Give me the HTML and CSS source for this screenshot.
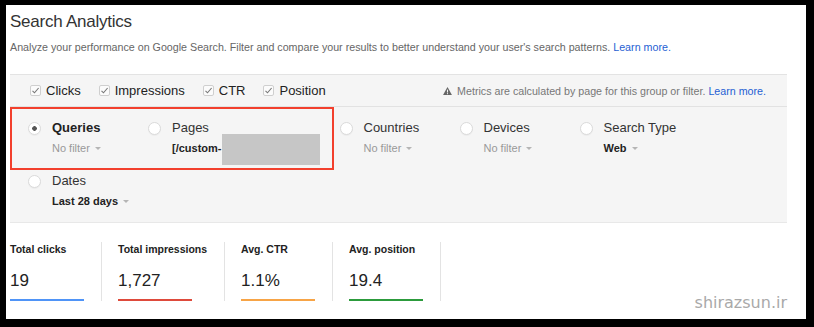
FILE: index.html
```html
<!DOCTYPE html>
<html lang="en">

<head>
    <meta charset="UTF-8">
    <meta name="viewport" content="width=device-width, initial-scale=1.0">
    <title>Search Analytics</title>
    <link rel="stylesheet" href="styles.css">
</head>

<body>
    <div class="panel">
        <h1 class="title">Search Analytics</h1>
        <p class="intro">Analyze your performance on Google Search. Filter and compare your results to better understand your user's search patterns. <a href="#">Learn more.</a></p>

        <div class="filters">
            <div class="metrics">
                <label class="metric"><svg class="check" viewBox="0 0 11 11"><rect x="0.5" y="0.5" width="10" height="10" rx="1.5" /><polyline points="2.5,5.8 4.5,7.8 8.6,3" /></svg>Clicks</label>
                <label class="metric"><svg class="check" viewBox="0 0 11 11"><rect x="0.5" y="0.5" width="10" height="10" rx="1.5" /><polyline points="2.5,5.8 4.5,7.8 8.6,3" /></svg>Impressions</label>
                <label class="metric"><svg class="check" viewBox="0 0 11 11"><rect x="0.5" y="0.5" width="10" height="10" rx="1.5" /><polyline points="2.5,5.8 4.5,7.8 8.6,3" /></svg>CTR</label>
                <label class="metric"><svg class="check" viewBox="0 0 11 11"><rect x="0.5" y="0.5" width="10" height="10" rx="1.5" /><polyline points="2.5,5.8 4.5,7.8 8.6,3" /></svg>Position</label>

                <p class="notice"><svg class="warn" viewBox="0 0 10 9"><polygon points="5,0 10,9 0,9" /><rect x="4.4" y="3" width="1.2" height="3.2" /><rect x="4.4" y="6.9" width="1.2" height="1.2" /></svg>Metrics are calculated by page for this group or filter.&nbsp;<a href="#">Learn more.</a></p>
            </div>

            <div class="filter-row">
                <div class="highlight">
                    <div class="filter-item">
                        <span class="radio on"></span>
                        <div>
                            <div class="filter-name strong">Queries</div>
                            <div class="filter-value">No filter<span class="caret"></span></div>
                        </div>
                    </div>
                    <div class="filter-item">
                        <span class="radio"></span>
                        <div>
                            <div class="filter-name">Pages</div>
                            <div class="filter-value strong">[/custom-<span class="hidden-url"></span></div>
                        </div>
                    </div>
                </div>

                <div class="filter-item">
                    <span class="radio"></span>
                    <div>
                        <div class="filter-name">Countries</div>
                        <div class="filter-value">No filter<span class="caret"></span></div>
                    </div>
                </div>
                <div class="filter-item">
                    <span class="radio"></span>
                    <div>
                        <div class="filter-name">Devices</div>
                        <div class="filter-value">No filter<span class="caret"></span></div>
                    </div>
                </div>
                <div class="filter-item">
                    <span class="radio"></span>
                    <div>
                        <div class="filter-name">Search Type</div>
                        <div class="filter-value strong">Web<span class="caret"></span></div>
                    </div>
                </div>
            </div>

            <div class="filter-row dates">
                <div class="filter-item">
                    <span class="radio"></span>
                    <div>
                        <div class="filter-name">Dates</div>
                        <div class="filter-value strong">Last 28 days<span class="caret"></span></div>
                    </div>
                </div>
            </div>
        </div>

        <div class="stats">
            <div class="stat">
                <div class="stat-label">Total clicks</div>
                <div class="stat-value">19</div>
                <div class="stat-bar blue"></div>
            </div>
            <div class="stat">
                <div class="stat-label">Total impressions</div>
                <div class="stat-value">1,727</div>
                <div class="stat-bar red"></div>
            </div>
            <div class="stat">
                <div class="stat-label">Avg. CTR</div>
                <div class="stat-value">1.1%</div>
                <div class="stat-bar orange"></div>
            </div>
            <div class="stat">
                <div class="stat-label">Avg. position</div>
                <div class="stat-value">19.4</div>
                <div class="stat-bar green"></div>
            </div>
            <div class="stat last"></div>

            <span class="watermark">shirazsun.ir</span>
        </div>
    </div>
</body>

</html>
```

FILE: styles.css
```css
* {
    box-sizing: border-box;
}

body {
    background-color: #000;
    margin: 0;
    padding: 5px 8px 8px 6px;
    font-family: 'Liberation Sans', Arial, sans-serif;
    color: #222;
}

a {
    color: #1f5fd3;
    text-decoration: none;
}

.panel {
    width: 800px;
    height: 314px;
    background-color: #fff;
    padding-left: 4px;
    overflow: hidden;
}

.title {
    margin: 7px 0 0;
    font-size: 17px;
    font-weight: normal;
    line-height: 20px;
    letter-spacing: -0.25px;
    color: #333;
}

.intro {
    margin: 8px 0 0;
    font-size: 10.7px;
    line-height: 14px;
    color: #666;
}

.filters {
    width: 777px;
    margin-top: 20px;
    background-color: #f5f5f5;
    border-top: 1px solid #e3e3e3;
    border-bottom: 1px solid #e8e8e8;
}

.metrics {
    display: flex;
    align-items: center;
    height: 32px;
    padding: 0 21px 0 20px;
    border-bottom: 1px solid #e2e2e2;
    font-size: 13px;
}

.metric {
    display: flex;
    align-items: center;
    gap: 5px;
    margin-right: 18px;
    color: #222;
}

.check {
    width: 11px;
    height: 11px;
}

.check rect {
    fill: #fbfbfb;
    stroke: #cfcfcf;
}

.check polyline {
    fill: none;
    stroke: #777;
    stroke-width: 1.1;
}

.notice {
    margin: 0 0 0 auto;
    display: flex;
    align-items: center;
    font-size: 10.7px;
    color: #777;
}

.warn {
    width: 9px;
    height: 8px;
    margin-right: 5px;
}

.warn polygon {
    fill: #666;
}

.warn rect {
    fill: #f5f5f5;
}

.filter-row {
    display: flex;
    align-items: flex-start;
}

.highlight {
    display: flex;
    border: 2px solid #f2402d;
    padding: 0 0 13px 16px;
}

.filter-item {
    display: flex;
    align-items: flex-start;
    gap: 11px;
    min-width: 120px;
    padding: 11px 12px 0 0;
}

.filter-row > .filter-item {
    margin-top: 2px;
}

.highlight + .filter-item {
    margin-left: 6px;
}

.filter-row.dates > .filter-item {
    margin: 0 0 0 18px;
    padding: 3px 0 14px;
}

.radio {
    flex: none;
    width: 13px;
    height: 13px;
    margin-top: 2px;
    border-radius: 50%;
    background-color: #fff;
    border: 1px solid #dadada;
    box-shadow: 0 1px 1px rgba(0, 0, 0, 0.04);
}

.radio.on {
    background: radial-gradient(circle, #555 0 2px, #fff 2.6px);
}

.filter-name {
    font-size: 13px;
    line-height: 16px;
    color: #333;
}

.filter-value {
    display: flex;
    align-items: center;
    margin-top: 5px;
    font-size: 11px;
    line-height: 14px;
    color: #999;
}

.strong {
    font-weight: bold;
    color: #222;
}

.caret {
    width: 0;
    height: 0;
    margin-left: 5px;
    border-left: 3px solid transparent;
    border-right: 3px solid transparent;
    border-top: 3px solid #b5b5b5;
}

.hidden-url {
    width: 98px;
    height: 31px;
    margin: -7px 0 -10px;
    background-color: #c6c6c6;
}

.stats {
    display: flex;
    align-items: flex-start;
    width: 777px;
    margin-top: 19px;
}

.stat {
    min-width: 107px;
    padding: 0 17px 0 16px;
    border-left: 1px solid #e3e3e3;
    height: 59px;
}

.stat:first-child {
    border-left: none;
    padding-left: 0;
    min-width: 91px;
}

.stat.last {
    min-width: 0;
    padding: 0;
}

.stat-label {
    font-size: 10.5px;
    line-height: 14px;
    font-weight: bold;
}

.stat-value {
    margin-top: 15px;
    font-size: 17px;
    line-height: 20px;
}

.stat-bar {
    width: 74px;
    height: 2px;
    margin-top: 8px;
}

.blue {
    background-color: #4f94f7;
}

.red {
    background-color: #de4a3b;
}

.orange {
    background-color: #f7a446;
}

.green {
    background-color: #2c9b3c;
}

.watermark {
    margin: 51px 0 0 auto;
    font-family: 'DejaVu Sans', sans-serif;
    font-size: 16px;
    line-height: 19px;
    color: #a9a9a9;
}
```
